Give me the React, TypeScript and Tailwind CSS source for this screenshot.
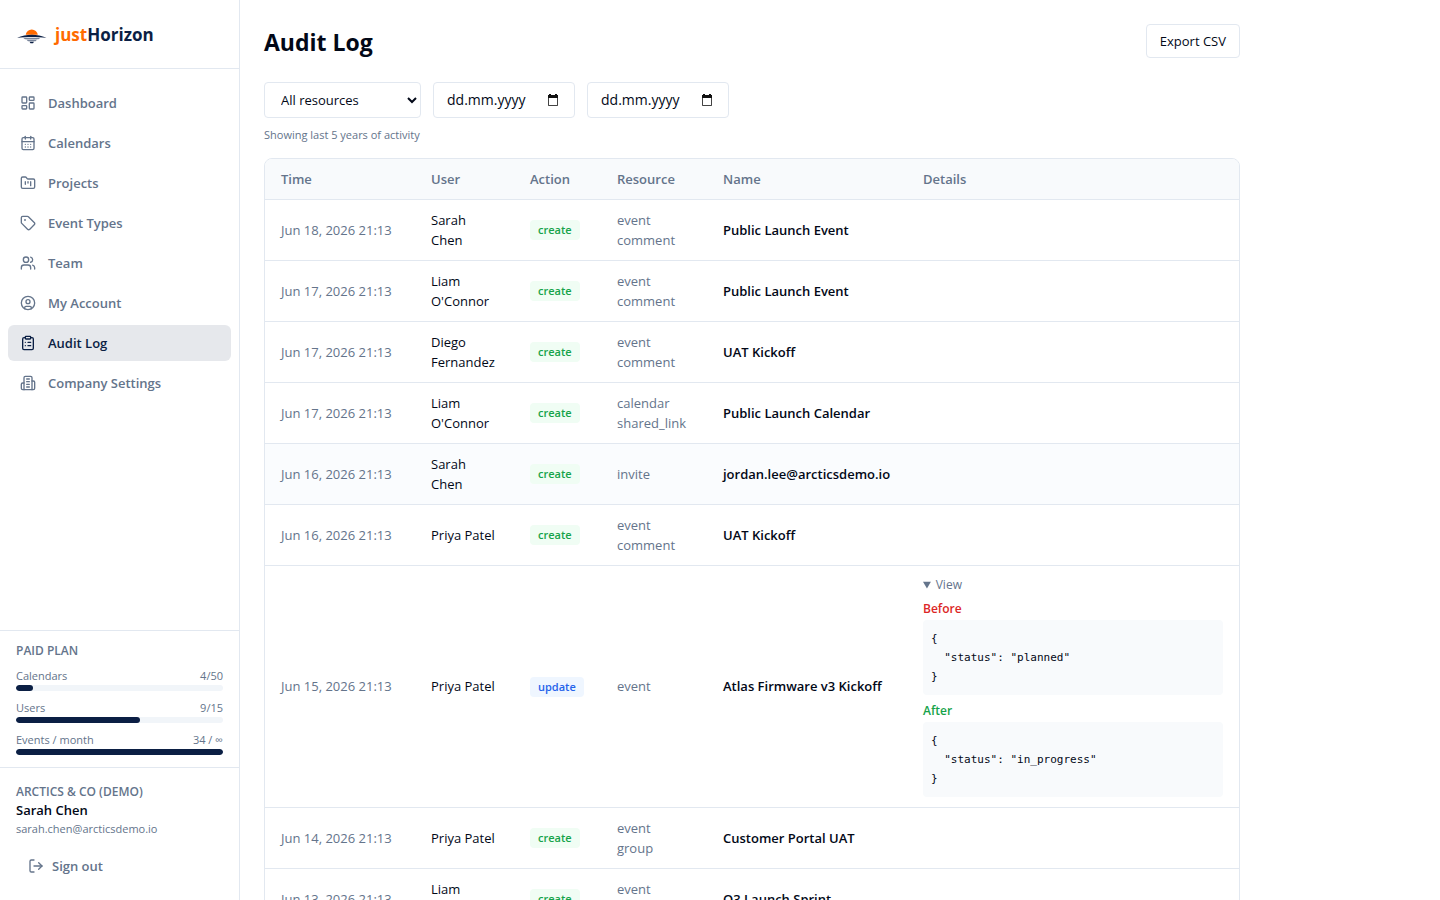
import {
	CalendarDays,
	CircleUser,
	ClipboardList,
	FolderKanban,
	LayoutDashboard,
	LogOut,
	Tag,
	Users,
} from 'lucide-react';


const navItems = [
	{ label: 'Dashboard', icon: LayoutDashboard },
	{ label: 'Calendars', icon: CalendarDays },
	{ label: 'Projects', icon: FolderKanban },
	{ label: 'Event Types', icon: Tag },
	{ label: 'Team', icon: Users },
	{ label: 'My Account', icon: CircleUser },
	{ label: 'Audit Log', icon: ClipboardList, active: true },
	{ label: 'Company Settings', icon: BuildingIcon },
];

const usage = [
	{ label: 'Calendars', value: '4/50', percent: 8 },
	{ label: 'Users', value: '9/15', percent: 60 },
	{ label: 'Events / month', value: '34 / ∞', percent: 100 },
];

type Entry = {
	time: string;
	user: string;
	action: 'create' | 'update';
	resource: string;
	name: string;
	highlighted?: boolean;
	before?: object;
	after?: object;
};

const entries: Entry[] = [
	{ time: 'Jun 18, 2026 21:13', user: 'Sarah Chen', action: 'create', resource: 'event comment', name: 'Public Launch Event' },
	{ time: 'Jun 17, 2026 21:13', user: "Liam O'Connor", action: 'create', resource: 'event comment', name: 'Public Launch Event' },
	{ time: 'Jun 17, 2026 21:13', user: 'Diego Fernandez', action: 'create', resource: 'event comment', name: 'UAT Kickoff' },
	{ time: 'Jun 17, 2026 21:13', user: "Liam O'Connor", action: 'create', resource: 'calendar shared_link', name: 'Public Launch Calendar' },
	{ time: 'Jun 16, 2026 21:13', user: 'Sarah Chen', action: 'create', resource: 'invite', name: 'jordan.lee@arcticsdemo.io', highlighted: true },
	{ time: 'Jun 16, 2026 21:13', user: 'Priya Patel', action: 'create', resource: 'event comment', name: 'UAT Kickoff' },
	{
		time: 'Jun 15, 2026 21:13',
		user: 'Priya Patel',
		action: 'update',
		resource: 'event',
		name: 'Atlas Firmware v3 Kickoff',
		before: { status: 'planned' },
		after: { status: 'in_progress' },
	},
	{ time: 'Jun 14, 2026 21:13', user: 'Priya Patel', action: 'create', resource: 'event group', name: 'Customer Portal UAT' },
	{ time: 'Jun 13, 2026 21:13', user: "Liam O'Connor", action: 'create', resource: 'event group', name: 'Q3 Launch Sprint' },
];


export default function App() {
	return (
		<div className="flex h-screen overflow-hidden bg-white font-['Open_Sans',sans-serif] text-[13px] leading-5 text-[#020817]">
			<Sidebar />

			<main className="min-w-0 flex-1 overflow-y-auto p-6 [scrollbar-width:none]">
				<div className="flex max-w-[976px] flex-col">

					<div className="flex items-start justify-between">
						<h1 className="text-[23px] leading-9 font-bold">Audit Log</h1>
						<button type="button" className="h-[34px] rounded border border-slate-200 px-[13px]">
							Export CSV
						</button>
					</div>

					<Filters />

					<p className="mt-[9px] text-[11px] leading-4 text-[#64748b]">
						Showing last 5 years of activity
					</p>

					<AuditTable />
				</div>
			</main>
		</div>
	);
}


function Sidebar() {
	return (
		<aside className="flex w-60 shrink-0 flex-col border-r border-slate-200">

			<div className="flex h-[69px] shrink-0 items-center gap-[7px] border-b border-slate-200 px-4">
				<Logo />
				<span className="pt-px text-[17px] leading-7 font-bold text-[#0b1f44]">
					<span className="text-[#ff6a00]">just</span>Horizon
				</span>
			</div>

			<nav className="flex flex-1 flex-col gap-1 px-2 py-4">
				{navItems.map(({ label, icon: Icon, active }) => (
					<a
						key={label}
						href="#"
						aria-current={active ? 'page' : undefined}
						className={`flex h-9 items-center gap-3 rounded-md px-3 font-semibold ${
							active ? 'bg-[#e6e8ec] text-[#0b1f44]' : 'text-[#64748b]'
						}`}
					>
						<Icon className="size-4 shrink-0" />
						{label}
					</a>
				))}
			</nav>

			<div className="flex flex-col gap-2 border-t border-slate-200 px-4 py-3 text-[11px] leading-4 text-[#64748b]">
				<div className="text-[12px] font-semibold">PAID PLAN</div>
				{usage.map(({ label, value, percent }) => (
					<div key={label}>
						<div className="flex justify-between leading-[18px]">
							<span>{label}</span>
							<span>{value}</span>
						</div>
						<div className="h-[6px] overflow-hidden rounded-full bg-slate-100">
							<div className="h-full rounded-full bg-[#0b1f44]" style={{ width: `${percent}%` }} />
						</div>
					</div>
				))}
			</div>

			<div className="border-t border-slate-200 p-4">
				<div className="text-[12px] leading-4 font-semibold text-[#64748b]">ARCTICS & CO (DEMO)</div>
				<div className="font-semibold">Sarah Chen</div>
				<div className="text-[11px] leading-[18px] text-[#64748b]">sarah.chen@arcticsdemo.io</div>
				<button type="button" className="mt-[10px] flex h-9 w-full items-center gap-2 px-3 font-semibold text-[#64748b]">
					<LogOut className="size-4" />
					Sign out
				</button>
			</div>
		</aside>
	);
}


function Filters() {
	return (
		<div className="mt-[22px] flex gap-3">
			<select
				aria-label="Resource"
				className="h-9 w-[157px] rounded border border-slate-200 bg-white px-3"
			>
				<option>All resources</option>
			</select>
			<DateInput label="From date" />
			<DateInput label="To date" />
		</div>
	);
}

function DateInput({ label }: { label: string }) {
	return (
		<div className="flex h-9 w-[142px] items-center justify-between rounded border border-slate-200 px-[13px]">
			<input
				type="text"
				aria-label={label}
				placeholder="dd.mm.yyyy"
				className="w-[90px] min-w-0 text-[14px] placeholder:text-[#020817]"
			/>
			<svg className="size-4 shrink-0" viewBox="0 0 16 16" aria-hidden="true">
				<path d="M3.500 5v8.500h9V5" fill="none" stroke="#444" />
				<path d="M3.500 13.500h9" stroke="#444" />
				<path d="M3 3h10v3H3zM4 2h2v2H4zM10 2h2v2h-2z" fill="#111" />
			</svg>
		</div>
	);
}


function AuditTable() {
	return (
		<div className="mt-[15px] overflow-hidden rounded-lg border border-slate-200">
			<table className="w-full table-fixed">
				<colgroup>
					<col className="w-[150px]" />
					<col className="w-[99px]" />
					<col className="w-[87px]" />
					<col className="w-[106px]" />
					<col className="w-[200px]" />
					<col />
				</colgroup>
				<thead className="bg-slate-50 text-left text-[#64748b]">
					<tr className="h-10 border-b border-slate-200">
						<th className="px-4 font-semibold">Time</th>
						<th className="px-4 font-semibold">User</th>
						<th className="px-4 font-semibold">Action</th>
						<th className="px-4 font-semibold">Resource</th>
						<th className="px-4 font-semibold">Name</th>
						<th className="px-4 font-semibold">Details</th>
					</tr>
				</thead>
				<tbody>
					{entries.map((entry, i) => (
						<tr
							key={i}
							className={`h-[61px] border-b border-slate-200 ${entry.highlighted ? 'bg-[#fafcfe]' : ''}`}
						>
							<td className="px-4 whitespace-nowrap text-[#64748b]">{entry.time}</td>
							<td className="px-4">{entry.user}</td>
							<td className="px-4"><ActionBadge action={entry.action} /></td>
							<td className="pr-5 pl-4 text-[#64748b]">{entry.resource}</td>
							<td className="px-4 font-semibold whitespace-nowrap">{entry.name}</td>
							<td className="px-4 py-[10px]">
								{entry.before && entry.after && (
									<details open className="text-[12px] leading-4">
										<summary className="pt-px text-[#64748b]">View</summary>
										<div className="mt-2 flex flex-col gap-2">
											<Snapshot label="Before" value={entry.before} labelClass="text-[#dc2626]" />
											<Snapshot label="After" value={entry.after} labelClass="text-[#16a34a]" />
										</div>
									</details>
								)}
							</td>
						</tr>
					))}
				</tbody>
			</table>
		</div>
	);
}

function ActionBadge({ action }: { action: Entry['action'] }) {
	return (
		<span
			className={`inline-block rounded px-2 text-[11px] font-semibold ${
				action === 'create' ? 'bg-[#f0fdf4] text-[#16a34a]' : 'bg-[#eff6ff] text-[#2563eb]'
			}`}
		>
			{action}
		</span>
	);
}

function Snapshot({ label, value, labelClass }: { label: string; value: object; labelClass: string }) {
	return (
		<div>
			<div className={`mb-[3px] font-semibold ${labelClass}`}>{label}</div>
			<pre className="rounded bg-slate-50 px-2 py-[9px] font-['DejaVu_Sans_Mono',monospace] text-[11px] leading-[19px]">
				{JSON.stringify(value, null, 2)}
			</pre>
		</div>
	);
}


function Logo() {
	return (
		<svg className="h-8 w-8 shrink-0" viewBox="0 0 32 32" aria-hidden="true">
			<path d="M9.700 16.800a6.100 6.100 0 0 1 12.100 0z" fill="#ff6a00" />
			<path d="M1 19.800c5-2 9.500-3 14.800-3s9.700 1 14.700 3c-5-.7-9.500-.8-14.700-.8s-9.800.1-14.800.8z" fill="#0b1f44" />
			<path d="M7 19.800h17.500l-2 1.500H9zM10.500 21.800h10.500l-1.500 1.500h-7.500z" fill="#78849a" />
			<path d="M13.500 23.800h4.500l-1 1.500h-2.500z" fill="#0b1f44" />
		</svg>
	);
}

function BuildingIcon({ className }: { className?: string }) {
	return (
		<svg
			className={className}
			viewBox="0 0 24 24"
			fill="none"
			stroke="currentColor"
			strokeWidth="2"
			strokeLinecap="round"
			strokeLinejoin="round"
			aria-hidden="true"
		>
			<path d="M6 22V4a2 2 0 0 1 2-2h8a2 2 0 0 1 2 2v18Z" />
			<path d="M6 12H4a2 2 0 0 0-2 2v6a2 2 0 0 0 2 2h2" />
			<path d="M18 9h2a2 2 0 0 1 2 2v9a2 2 0 0 1-2 2h-2" />
			<path d="M10 6h4M10 10h4M10 14h4M10 18h4" />
		</svg>
	);
}
